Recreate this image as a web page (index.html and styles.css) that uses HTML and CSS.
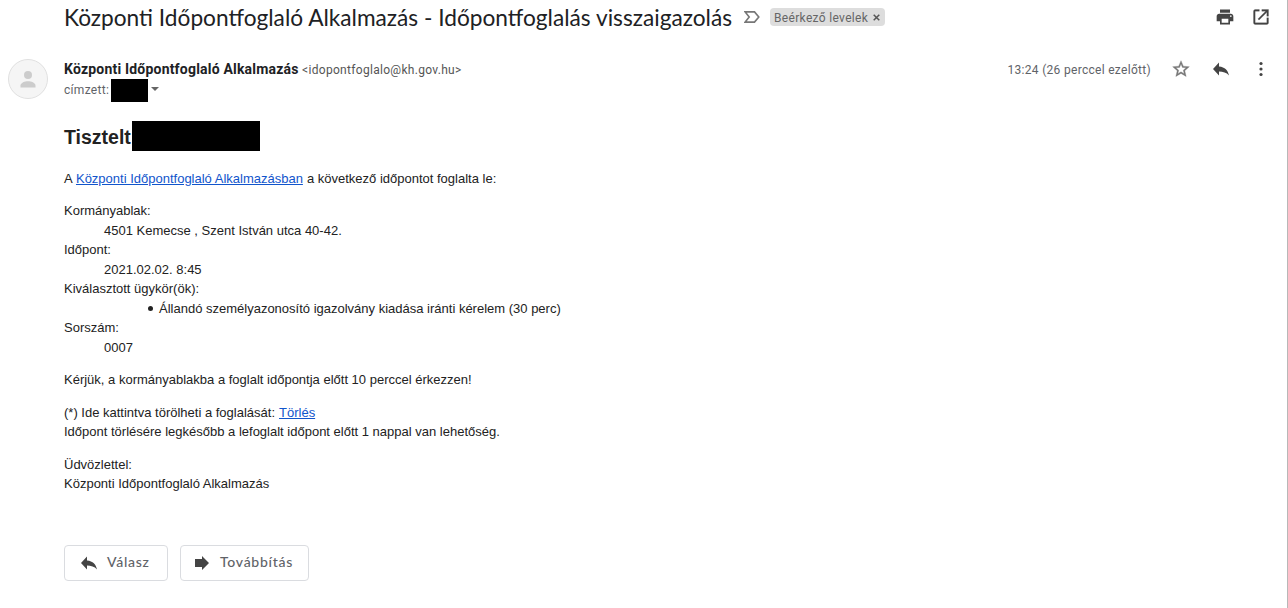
FILE: index.html
```
<!DOCTYPE html>
<html lang="hu">
<head>
  <meta charset="UTF-8" />
  <meta name="viewport" content="width=device-width, initial-scale=1.0"/>
  <title>Központi Időpontfoglaló Alkalmazás - Időpontfoglalás visszaigazolás</title>
  <link rel="stylesheet" href="styles.css">
</head>
<body>
  <div class="mail">
    <header class="subject-row">
      <h1 class="subject">Központi Időpontfoglaló Alkalmazás - Időpontfoglalás visszaigazolás</h1>
      <svg class="marker" width="16" height="12" viewBox="0 0 16 12"><path d="M1.2 .9h9.3L14.8 6l-4.3 5.1H1.2L5.2 6z" fill="none" stroke="#777" stroke-width="1.6"/></svg>
      <span class="label">Beérkező levelek
        <svg width="7" height="7" viewBox="0 0 7 7"><path d="M.7.7l5.6 5.6M6.3.7L.7 6.3" stroke="#555" stroke-width="1.5"/></svg>
      </span>
      <div class="tools">
        <svg width="20" height="20" viewBox="0 0 24 24"><path fill="#444" d="M19 8H5c-1.66 0-3 1.34-3 3v6h4v4h12v-4h4v-6c0-1.66-1.34-3-3-3zm-3 11H8v-5h8v5zm3-7c-.55 0-1-.45-1-1s.45-1 1-1 1 .45 1 1-.45 1-1 1zm-1-9H6v4h12V3z"/></svg>
        <svg width="20" height="20" viewBox="0 0 24 24"><path fill="#444" stroke="#444" stroke-width=".3" d="M19 19H5V5h5V3H5a2 2 0 0 0-2 2v14a2 2 0 0 0 2 2h14c1.1 0 2-.9 2-2v-6h-2v6zM13 3v2h4.6l-9.3 9.3 1.4 1.4L19 6.4V11h2V3h-8z"/></svg>
      </div>
    </header>

    <section class="sender-row">
      <svg class="avatar" width="40" height="40" viewBox="0 0 40 40">
        <circle cx="20" cy="20" r="19.5" fill="#f5f5f5" stroke="#e0e0e0"/>
        <circle cx="20" cy="16" r="4" fill="#ccc"/>
        <path d="M12.5 28.5v-2c0-2.7 4.4-4.2 7.5-4.2s7.5 1.5 7.5 4.2v2z" fill="#ccc"/>
      </svg>
      <div class="sender">
        <div class="from"><b class="name">Központi Időpontfoglaló Alkalmazás</b> <span class="address">&lt;idopontfoglalo@kh.gov.hu&gt;</span></div>
        <div class="to"><span class="to-text">címzett:</span><span class="redacted redacted-to"></span><span class="caret"></span></div>
      </div>
      <div class="meta">
        <span class="date">13:24 (26 perccel ezelőtt)</span>
        <svg width="20" height="20" viewBox="0 0 24 24"><path fill="#777" stroke="#777" stroke-width=".4" d="M22 9.24l-7.19-.62L12 2 9.19 8.63 2 9.24l5.46 4.73L5.82 21 12 17.27 18.18 21l-1.63-7.03L22 9.24zM12 15.4l-3.76 2.27 1-4.28-3.32-2.88 4.38-.38L12 6.1l1.71 4.04 4.38.38-3.32 2.88 1 4.28L12 15.4z"/></svg>
        <svg width="20" height="20" viewBox="0 0 20 20"><path fill="#444" d="M8 3.500v4C14 8 17 11.500 18 16.500 15.500 13.500 12 12.500 8 12.500v4L2 10z"/></svg>
        <svg width="20" height="20" viewBox="0 0 20 20" fill="#444"><circle cx="10" cy="4.500" r="1.600"/><circle cx="10" cy="10" r="1.600"/><circle cx="10" cy="15.500" r="1.600"/></svg>
      </div>
    </section>

    <main class="content">
      <h2><span>Tisztelt</span><span class="redacted redacted-name"></span></h2>
      <p>A <a href="#">Központi Időpontfoglaló Alkalmazásban</a> a következő időpontot foglalta le:</p>
      <dl>
        <dt>Kormányablak:</dt>
        <dd>4501 Kemecse , Szent István utca 40-42.</dd>
        <dt>Időpont:</dt>
        <dd>2021.02.02. 8:45</dd>
        <dt>Kiválasztott ügykör(ök):</dt>
        <dd>
          <ul>
            <li>Állandó személyazonosító igazolvány kiadása iránti kérelem (30 perc)</li>
          </ul>
        </dd>
        <dt>Sorszám:</dt>
        <dd>0007</dd>
      </dl>
      <p>Kérjük, a kormányablakba a foglalt időpontja előtt 10 perccel érkezzen!</p>
      <p>(*) Ide kattintva törölheti a foglalását: <a href="#">Törlés</a><br>
      Időpont törlésére legkésőbb a lefoglalt időpont előtt 1 nappal van lehetőség.</p>
      <p>Üdvözlettel:<br>
      Központi Időpontfoglaló Alkalmazás</p>
    </main>

    <footer class="actions">
      <button class="btn btn-reply">
        <svg width="20" height="20" viewBox="0 0 20 20"><path fill="#444" d="M8 3.500v4C14 8 17 11.500 18 16.500 15.500 13.500 12 12.500 8 12.500v4L2 10z"/></svg>
        <span>Válasz</span>
      </button>
      <button class="btn btn-forward">
        <svg width="20" height="20" viewBox="0 0 20 20"><path fill="#444" d="M3 6h7V3l7 7-7 7v-3H3z"/></svg>
        <span>Továbbítás</span>
      </button>
    </footer>
  </div>
</body>
</html>
```
FILE: styles.css
```
* {
  box-sizing: border-box;
}

body {
  margin: 0;
  background: #fff;
  color: #222;
  font-family: Roboto, "Liberation Sans", sans-serif;
}

svg {
  display: block;
  flex-shrink: 0;
}

.mail {
  height: 608px;
  padding: 3px 16px 0 8px;
  border-right: 1px solid #b8b8b8;
}

.subject-row {
  display: flex;
  align-items: center;
  height: 28px;
  padding-left: 56px;
}

.subject {
  width: 668px;
  margin: 0;
  padding-top: 1px;
  font: 400 22.68px/28px Lato, sans-serif;
  color: #202124;
  white-space: nowrap;
}

.marker {
  margin-left: 12px;
}

.label {
  display: flex;
  align-items: center;
  justify-content: space-between;
  width: 115px;
  height: 18px;
  margin-left: 10px;
  padding: 1px 5px 0 4px;
  border-radius: 4px;
  background: #ddd;
  color: #666;
  font-size: 12px;
  letter-spacing: 0.33px;
  white-space: nowrap;
}

.tools {
  display: flex;
  gap: 16px;
  margin-left: auto;
}

.sender-row {
  display: flex;
  height: 71px;
  padding-top: 28px;
}

.sender {
  margin-left: 16px;
}

.from,
.to {
  height: 20px;
  line-height: 20px;
  white-space: nowrap;
}

.name {
  font-size: 14px;
  letter-spacing: 0.2px;
  color: #202124;
}

.address,
.to,
.date {
  font-size: 12px;
  letter-spacing: 0.3px;
  color: #5f6368;
}

.address {
  margin-left: -0.5px;
  color: #555;
}

.date {
  padding-top: 2px;
}

.to {
  display: flex;
  align-items: center;
  height: 23px;
}

.to-text {
  padding-bottom: 2px;
}

.redacted {
  background: #000;
}

.redacted-to {
  width: 37px;
  height: 23px;
  margin-left: 2px;
}

.caret {
  margin: -3px 0 0 3px;
  border: 4px solid transparent;
  border-top-color: #666;
  border-bottom: 0;
}

.meta {
  display: flex;
  align-items: center;
  gap: 20px;
  height: 20px;
  margin-left: auto;
}

.content {
  padding: 19px 0 0 56px;
  font: 13px/19.5px "Liberation Sans", sans-serif;
}

.content h2 {
  display: flex;
  align-items: center;
  height: 30px;
  margin: 0 0 17.5px;
  font-size: 19.5px;
}

.content h2 span:first-child {
  padding-top: 3px;
}

.redacted-name {
  width: 128px;
  height: 30px;
  margin-left: 1px;
}

.content p,
.content dl {
  margin: 0 0 13px;
}

.content dd {
  margin-left: 40px;
}

.content ul {
  margin: 0;
  padding-left: 43px;
  list-style: none;
}

.content li {
  display: flex;
  align-items: center;
}

.content li::before {
  content: "";
  width: 5px;
  height: 5px;
  margin: 1px 6px 0 1px;
  border-radius: 50%;
  background: #222;
}

.content a {
  margin: 0 0.4px;
  color: #15c;
}

.actions {
  display: flex;
  gap: 12px;
  padding: 38.5px 0 0 56px;
}

.btn {
  display: flex;
  align-items: center;
  height: 36px;
  padding: 0 0 0 14px;
  border: 1px solid #dadce0;
  border-radius: 4px;
  background: #fff;
  color: #5f6368;
  font: 500 14px Lato, sans-serif;
  letter-spacing: 0.72px;
}

.btn span {
  padding-bottom: 3px;
}

.btn-reply {
  width: 104px;
  gap: 8px;
}

.btn-forward {
  width: 129px;
  padding-left: 11px;
  gap: 8px;
}
```
